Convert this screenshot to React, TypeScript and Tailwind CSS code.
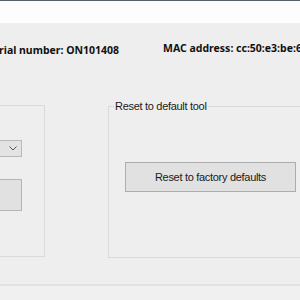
const App = () => {
  return (
    <div className="w-[300px] h-[300px] overflow-hidden bg-[#eeeeee] font-['Liberation_Sans',sans-serif] text-[#1a1a1a]">
      <div className="h-[1px] bg-[#56626a]" />
      <div className="h-[22px] bg-[#fdfdfd]" />

      <div className="relative h-[82px]">
        <div className="flex items-start whitespace-nowrap pt-[20px] font-['Noto_Sans',sans-serif] text-[10.5px] font-bold text-[#111]">
          <span className="ml-[-13px] mt-[0px]">Serial number: ON101408</span>
          <span className="ml-[44px] mt-[-2px]">MAC address: cc:50:e3:be:6a:1f</span>
        </div>
      </div>

      <div className="flex items-start">
        <fieldset className="ml-[-156px] h-[152px] w-[201px] shrink-0 border border-[#dadada]">
          <div className="mt-[34px] ml-[60px] flex h-[17px] w-[117px] items-center justify-end border border-[#b9b9b9] bg-[#e3e3e3] pr-[4px]">
            <svg width="8" height="5" viewBox="0 0 8 5" fill="none">
              <path d="M0.5 0.5 L4 4 L7.5 0.5" stroke="#555" strokeWidth="1" />
            </svg>
          </div>
          <div className="mt-[22px] ml-[60px] h-[32px] w-[117px] border border-[#b4b4b4] bg-[#e1e1e1]" />
        </fieldset>

        <fieldset className="ml-[63px] h-[158px] w-[250px] shrink-0 border border-[#dadada] -mt-[5px]">
          <legend className="ml-[5px] px-[1px] text-[11px] leading-[13px] tracking-[-0.3px] text-[#1a1a1a]">
            Reset to default tool
          </legend>
          <button className="mt-[49px] ml-[16px] flex h-[30px] w-[171px] items-center justify-center border border-[#adadad] bg-[#e1e1e1] text-[11px] tracking-[-0.3px] text-[#1a1a1a]">
            Reset to factory defaults
          </button>
        </fieldset>
      </div>

      <div className="mt-[26px] h-[2px] bg-[#e2e2e2]" />
      <div className="h-[20px] bg-[#f0f0f0]" />
    </div>
  );
};

export default App;
